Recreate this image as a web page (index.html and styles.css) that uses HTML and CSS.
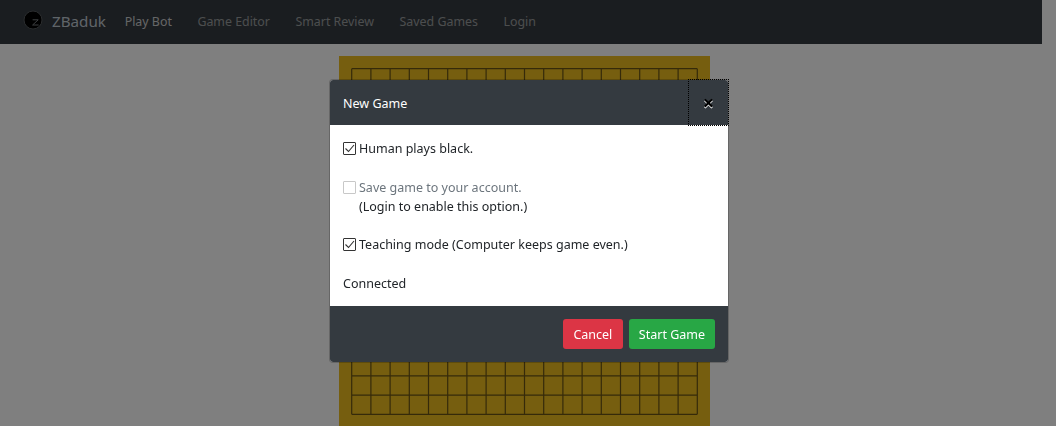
FILE: index.html
```html
<!DOCTYPE html>
<html lang="en">
<head>
<meta charset="utf-8">
<title>ZBaduk</title>
<link rel="stylesheet" href="styles.css">
</head>
<body>
<div class="page">
  <nav class="navbar">
    <a class="brand" href="#">
      <svg class="logo" width="20" height="20" viewBox="0 0 20 20" aria-hidden="true">
        <circle cx="10" cy="10" r="9" fill="#000" stroke="#55595c" stroke-width="1"/>
        <path d="M9.6 9.8h5.6L9.6 15h6" fill="none" stroke="#7c8084" stroke-width="1"/>
      </svg>
      <span class="brand-name">ZBaduk</span>
    </a>
    <a class="nav-link active" href="#">Play Bot</a>
    <a class="nav-link" href="#">Game Editor</a>
    <a class="nav-link" href="#">Smart Review</a>
    <a class="nav-link" href="#">Saved Games</a>
    <a class="nav-link" href="#">Login</a>
  </nav>
  <main class="main">
    <div class="board">
      <svg class="grid" width="371" height="370" viewBox="0 0 371 370" aria-hidden="true">
        <path d="M12.7 12.7V358.3M31.9 12.7V358.3M51.1 12.7V358.3M70.3 12.7V358.3M89.5 12.7V358.3M108.7 12.7V358.3M127.9 12.7V358.3M147.1 12.7V358.3M166.3 12.7V358.3M185.5 12.7V358.3M204.7 12.7V358.3M223.9 12.7V358.3M243.1 12.7V358.3M262.3 12.7V358.3M281.5 12.7V358.3M300.7 12.7V358.3M319.9 12.7V358.3M339.1 12.7V358.3M358.3 12.7V358.3M12.7 12.7H358.3M12.7 31.9H358.3M12.7 51.1H358.3M12.7 70.3H358.3M12.7 89.5H358.3M12.7 108.7H358.3M12.7 127.9H358.3M12.7 147.1H358.3M12.7 166.3H358.3M12.7 185.5H358.3M12.7 204.7H358.3M12.7 223.9H358.3M12.7 243.1H358.3M12.7 262.3H358.3M12.7 281.5H358.3M12.7 300.7H358.3M12.7 319.9H358.3M12.7 339.1H358.3M12.7 358.3H358.3" fill="none" stroke="#6b5414" stroke-width="1.2"/>
      </svg>
    </div>
  </main>
</div>
<div class="backdrop"></div>
<div class="modal-wrap">
  <div class="modal">
    <header class="modal-header">
      <h5 class="modal-title">New Game</h5>
      <button class="close" type="button">×</button>
    </header>
    <div class="modal-body">
      <label class="option">
        <span class="check"><svg viewBox="0 0 13 13" width="13" height="13"><path d="M2.5 6.5l3 3 5.5-6.5" fill="none" stroke="#333" stroke-width="1.1"/></svg></span>
        <span>Human plays black.</span>
      </label>
      <div class="option-group">
        <label class="option disabled">
          <span class="check"></span>
          <span>Save game to your account.</span>
        </label>
        <div class="note">(Login to enable this option.)</div>
      </div>
      <label class="option">
        <span class="check"><svg viewBox="0 0 13 13" width="13" height="13"><path d="M2.5 6.5l3 3 5.5-6.5" fill="none" stroke="#333" stroke-width="1.1"/></svg></span>
        <span>Teaching mode (Computer keeps game even.)</span>
      </label>
      <div class="status">Connected</div>
    </div>
    <footer class="modal-footer">
      <button class="btn btn-danger" type="button">Cancel</button>
      <button class="btn btn-success" type="button">Start Game</button>
    </footer>
  </div>
</div>
</body>
</html>
```
FILE: styles.css
```css
* { box-sizing: border-box; }
html, body { height: 100%; }
body {
  margin: 0;
  overflow: hidden;
  background: #fff;
  color: #212529;
  font-family: "Noto Sans", "Open Sans", sans-serif;
  font-size: 12.5px;
  line-height: 19.5px;
}
.page { width: 1042px; }
.navbar {
  display: flex;
  align-items: center;
  height: 44px;
  padding-left: 23px;
  background: #343a40;
}
.brand {
  display: flex;
  align-items: center;
  gap: 9px;
  margin-right: 6px;
  font-size: 15.2px;
  text-decoration: none;
}
.logo { margin-bottom: 5px; }
.brand-name { color: rgba(230, 240, 250, .8); }
.nav-link {
  padding: 0 12.75px;
  color: rgba(255, 255, 255, .5);
  font-size: 12.4px;
  text-decoration: none;
}
.nav-link.active { color: rgba(255, 255, 255, .75); }
.main { padding: 12px 0 0 339px; }
.board {
  width: 371px;
  height: 370px;
  background: #ecbc1e;
}
.grid { display: block; }
.backdrop {
  position: fixed;
  inset: 0;
  background: rgba(0, 0, 0, .5);
}
.modal-wrap {
  position: fixed;
  inset: 0;
  padding: 79px 0 0 329px;
}
.modal {
  width: 400px;
  border: 1px solid rgba(0, 0, 0, .2);
  border-radius: 4px;
  background: #fff;
  background-clip: padding-box;
}
.modal-header {
  position: relative;
  display: flex;
  align-items: center;
  justify-content: space-between;
  height: 45px;
  padding: 14px 13px 12px;
  background: #343a40;
  border-radius: 3px 3px 0 0;
}
.modal-title {
  margin: 0;
  color: #fff;
  font-size: 12.5px;
  font-weight: 400;
  line-height: 19.5px;
}
.close {
  position: absolute;
  top: -1px;
  right: -1px;
  width: 41px;
  height: 47px;
  padding: 0;
  border: 0;
  outline: 1px dotted #000;
  outline-offset: -1px;
  background: transparent;
  color: #000;
  font-family: "Noto Sans", sans-serif;
  font-size: 20px;
  font-weight: 700;
  line-height: 1;
  text-shadow: 0 1px 0 #fff;
}
.modal-body {
  display: flex;
  flex-direction: column;
  gap: 19px;
  height: 181px;
  padding: 13.5px 13px 13px;
}
.option {
  display: flex;
  align-items: center;
  gap: 3px;
  color: #212529;
}
.option.disabled { color: #6c757d; }
.option-group { margin: .5px 0 -.5px; }
.check {
  flex: none;
  width: 13px;
  height: 13px;
  border: 1px solid #333;
  border-radius: 1px;
  background: #fff;
  display: block;
}
.check svg { display: block; margin: -1px; }
.option.disabled .check { border-color: #c8c8c8; }
.note { padding-left: 16px; }
.modal-footer {
  display: flex;
  justify-content: flex-end;
  gap: 6px;
  height: 56px;
  padding: 13px;
  background: #343a40;
  border-radius: 0 0 3px 3px;
}
.btn {
  height: 30px;
  padding: 1px 10px 0;
  border: 0;
  border-radius: 3px;
  color: #fff;
  font-family: inherit;
  font-size: 12.5px;
  line-height: 19.5px;
}
.btn-danger { padding: 1px 10.5px 0; background: #dc3545; }
.btn-success { background: #28a745; }
```
